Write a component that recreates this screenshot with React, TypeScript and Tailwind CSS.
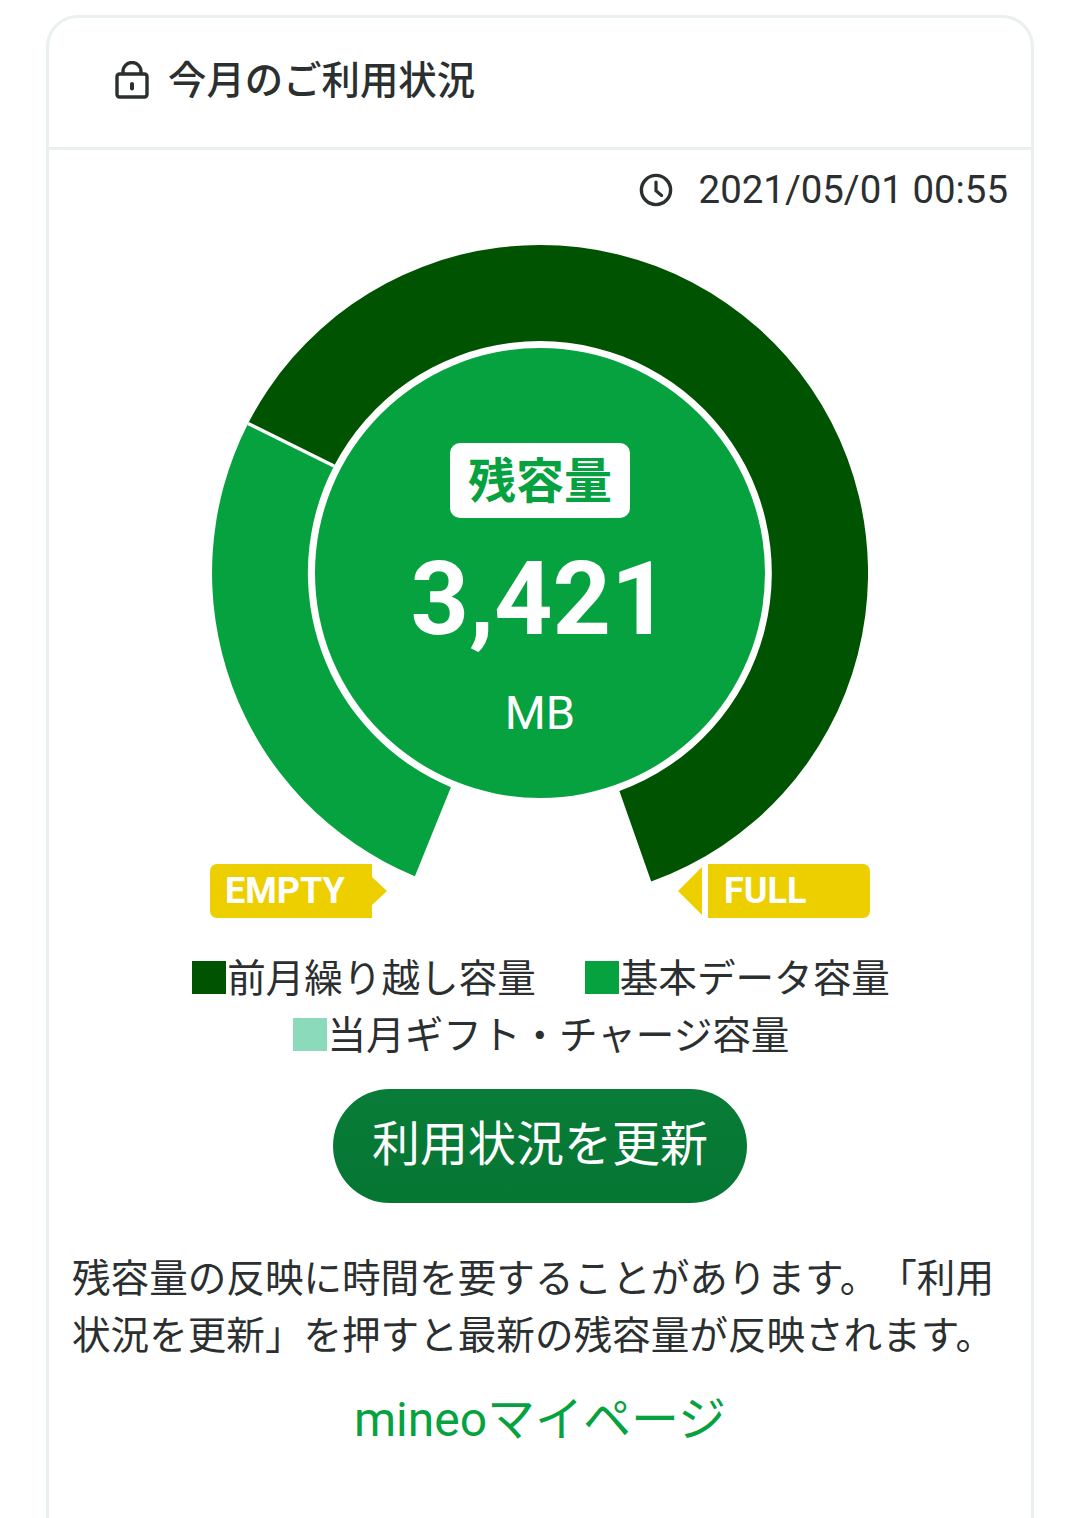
import React from 'react';

const FONT = 'font-["Roboto","Noto_Sans_CJK_JP",sans-serif]';

const LockIcon = () => (
  <svg width="36" height="38" viewBox="0 0 36 38" fill="none" className="text-[#2b2f30]">
    <rect x="3" y="13" width="30" height="23" rx="2.5" stroke="currentColor" strokeWidth="3.4" />
    <path d="M9 13V10.5a9 9 0 0 1 18 0V13" stroke="currentColor" strokeWidth="3.4" />
    <rect x="16" y="21" width="4" height="8.5" rx="2" fill="currentColor" />
  </svg>
);

const ClockIcon = () => (
  <svg width="36" height="36" viewBox="0 0 36 36" fill="none" className="text-[#2b2f30]">
    <circle cx="18" cy="18" r="14.6" stroke="currentColor" strokeWidth="3.4" />
    <path d="M18 10V18.8L23.6 23.4" stroke="currentColor" strokeWidth="3.2" strokeLinecap="round" />
  </svg>
);

const Gauge = () => (
  <div className="relative w-[656px] h-[656px]">
    <svg width="656" height="656" viewBox="0 0 656 656" className="block">
      <path d="M202.9 631.2A328 328 0 0 1 36.1 178.5L122 221A232 232 0 0 0 238.9 542.2Z" fill="#05a23f" />
      <path d="M36.1 178.5A328 328 0 1 1 439.2 636.6L407.4 546A232 232 0 1 0 122 221Z" fill="#005300" />
      <line x1="36.1" y1="178.5" x2="122" y2="221" stroke="#ffffff" strokeWidth="3.5" />
      <circle cx="328" cy="328" r="225" fill="#05a23f" />
    </svg>
    <div className="absolute inset-0 flex flex-col items-center pt-[198px] text-white">
      <div className="w-[180px] h-[75px] pt-[2px] rounded-[10px] bg-white flex items-center justify-center text-[48px] font-bold text-[#05a23f] leading-none">
        残容量
      </div>
      <div className="mt-[31px] text-[102px] leading-[100px] font-bold">3,421</div>
      <div className="mt-[40px] text-[47px] leading-[48px]">MB</div>
    </div>
  </div>
);

const Flags = () => (
  <div className="relative flex justify-between w-[660px] h-[54px] mt-[-37px]">
    <div className="flex items-center">
      <div className="w-[162px] h-[54px] rounded-l-[7px] bg-[#edcf00] pl-[15px] text-white font-bold text-[36px] leading-[54px]">
        EMPTY
      </div>
      <svg width="15" height="28" viewBox="0 0 15 28" className="block">
        <path d="M0 0L15 14L0 28Z" fill="#edcf00" />
      </svg>
    </div>
    <div className="flex items-center gap-[6px]">
      <svg width="24" height="48" viewBox="0 0 24 48" className="block">
        <path d="M24 0L0 24L24 48Z" fill="#edcf00" />
      </svg>
      <div className="w-[162px] h-[54px] rounded-r-[7px] bg-[#edcf00] pl-[16px] text-white font-bold text-[36px] leading-[54px]">
        FULL
      </div>
    </div>
  </div>
);

const LegendItem = ({ swatch, label }: { swatch: string; label: string }) => (
  <span className="inline-flex items-center">
    <span className={`w-[34px] h-[33px] mr-[1px] mb-[2px] ${swatch}`} />
    {label}
  </span>
);

export default function App() {
  return (
    <div className={`h-[1518px] overflow-hidden bg-white pt-[15px] px-[46px] text-[#2b2f30] [text-spacing-trim:space-all] ${FONT}`}>
      <div className="h-[1600px] border-[3px] border-[#eaf0ee] rounded-[32px]">
        {/* Header */}
        <div className="h-[132px] border-b-[3px] border-[#eaf0ee] flex items-center pl-[65px] pb-[6px]">
          <LockIcon />
          <h2 className="ml-[18px] mt-[4px] text-[38.4px] leading-none font-medium">今月のご利用状況</h2>
        </div>

        {/* Updated at */}
        <div className="flex justify-end items-center h-[80px] pr-[23px]">
          <ClockIcon />
          <span className="ml-[25px] text-[38.4px] leading-none">2021/05/01 00:55</span>
        </div>

        <div className="flex flex-col items-center mt-[15px]">
          <Gauge />
          <Flags />

          {/* Legend */}
          <div className="mt-[32px] text-[38.6px] leading-[57px] text-center">
            <div className="flex justify-center gap-[49px] pl-[2px]">
              <LegendItem swatch="bg-[#005300]" label="前月繰り越し容量" />
              <LegendItem swatch="bg-[#05a23f]" label="基本データ容量" />
            </div>
            <div className="flex justify-center pl-[2px]">
              <LegendItem swatch="bg-[#8adabb]" label="当月ギフト・チャージ容量" />
            </div>
          </div>

          <button className="mt-[25px] w-[414px] h-[114px] pb-[2px] rounded-[57px] bg-gradient-to-b from-[#087c38] to-[#067633] text-white text-[48px] leading-none">
            利用状況を更新
          </button>
        </div>

        <p className="mt-[47px] px-[23px] text-[38.6px] leading-[57px]">
          残容量の反映に時間を要することがあります。「利用状況を更新」を押すと最新の残容量が反映されます。
        </p>

        <a className="block mt-[20px] text-center text-[48px] leading-[72px] text-[#05a23f]">mineoマイページ</a>
      </div>
    </div>
  );
}
